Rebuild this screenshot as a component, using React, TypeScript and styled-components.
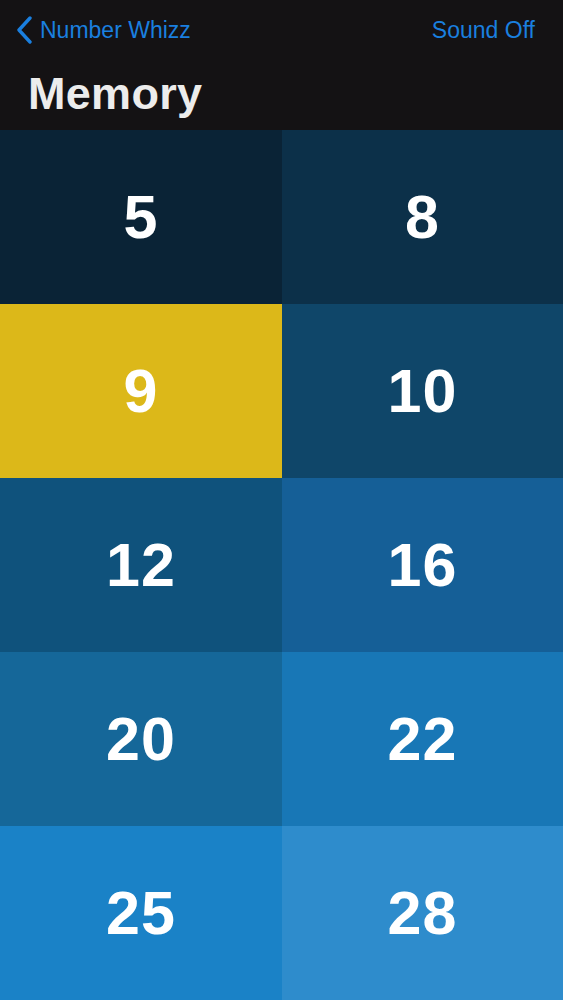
import React from 'react'
import styled, { createGlobalStyle } from 'styled-components'

const GlobalStyle = createGlobalStyle`
  html, body {
    margin: 0;
    padding: 0;
    background: #141214;
    font-family: "Liberation Sans", Arial, sans-serif;
  }
`

const Screen = styled.div`
  width: 563px;
  height: 1000px;
  display: flex;
  flex-direction: column;
  overflow: hidden;
`

const Header = styled.header`
  background: #141214;
  height: 130px;
  display: flex;
  flex-direction: column;
  box-sizing: border-box;
`

const NavBar = styled.div`
  height: 60px;
  display: flex;
  align-items: center;
  justify-content: space-between;
  padding: 0 28px 0 16px;
`

const BackButton = styled.button`
  display: flex;
  align-items: center;
  gap: 6px;
  background: none;
  border: 0;
  padding: 0;
  color: #1a7fdf;
  font-family: inherit;
  font-size: 23px;
  cursor: pointer;
`

const NavAction = styled.button`
  background: none;
  border: 0;
  padding: 0;
  color: #1a7fdf;
  font-family: inherit;
  font-size: 23px;
  cursor: pointer;
`

const Title = styled.h1`
  margin: 0;
  padding: 11px 0 0 28px;
  color: #ececec;
  font-size: 45px;
  font-weight: 700;
  letter-spacing: 0.3px;
  line-height: 1;
`

const Grid = styled.div`
  flex: 1;
  display: grid;
  grid-template-columns: 282px 1fr;
  grid-auto-rows: 1fr;
`

const Tile = styled.div<{ $bg: string }>`
  background: ${({ $bg }) => $bg};
  display: flex;
  align-items: center;
  justify-content: center;
  color: #ffffff;
  font-size: 61px;
  font-weight: 700;
  letter-spacing: 1px;
`

const tiles = [
  { n: 5, bg: '#0a2336' },
  { n: 8, bg: '#0c3049' },
  { n: 9, bg: '#dcb819' },
  { n: 10, bg: '#0f4669' },
  { n: 12, bg: '#0f527c' },
  { n: 16, bg: '#155f97' },
  { n: 20, bg: '#156799' },
  { n: 22, bg: '#1877b6' },
  { n: 25, bg: '#1a82c7' },
  { n: 28, bg: '#2e8ccc' },
]

const Chevron = () => (
  <svg width="18" height="28" viewBox="0 0 18 28">
    <path d="M14 2 L3 14 L14 26" fill="none" stroke="#1a7fdf" strokeWidth="3.4" strokeLinecap="round" strokeLinejoin="round" />
  </svg>
)

export default function App() {
  return (
    <>
      <GlobalStyle />
      <Screen>
        <Header>
          <NavBar>
            <BackButton>
              <Chevron />
              Number Whizz
            </BackButton>
            <NavAction>Sound Off</NavAction>
          </NavBar>
          <Title>Memory</Title>
        </Header>
        <Grid>
          {tiles.map((t) => (
            <Tile key={t.n} $bg={t.bg}>
              {t.n}
            </Tile>
          ))}
        </Grid>
      </Screen>
    </>
  )
}
